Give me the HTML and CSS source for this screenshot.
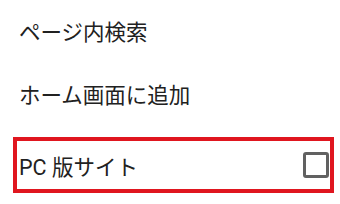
FILE: index.html
```html
<!DOCTYPE html>
<html lang="ja">
<head>
<meta charset="utf-8">
<link rel="stylesheet" href="styles.css">
</head>
<body>
<div class="menu">
  <div class="row first"><span class="label">ページ内検索</span></div>
  <div class="row"><span class="label">ホーム画面に追加</span></div>
  <div class="row highlight">
    <span class="label">PC 版サイト</span>
    <span class="checkbox"></span>
  </div>
</div>
</body>
</html>
```
FILE: styles.css
```css
html, body {
  margin: 0;
  padding: 0;
  background: #ffffff;
}
.menu {
  display: flex;
  flex-direction: column;
  width: 340px;
  font-family: Roboto, "Noto Sans CJK JP", sans-serif;
  color: #212121;
}
.row {
  box-sizing: border-box;
  height: 66px;
  display: flex;
  align-items: center;
  justify-content: space-between;
  padding: 0 20px 0 19px;
  font-size: 21.5px;
}
.row.first {
  height: 60px;
}
.row.highlight {
  height: 56px;
  margin: 11px 6px 0 13px;
  padding: 0 1px 0 2px;
  border: 4px solid #e0161f;
}
.checkbox {
  box-sizing: border-box;
  width: 26px;
  height: 26px;
  border: 3px solid #616161;
  border-radius: 3px;
}
```
